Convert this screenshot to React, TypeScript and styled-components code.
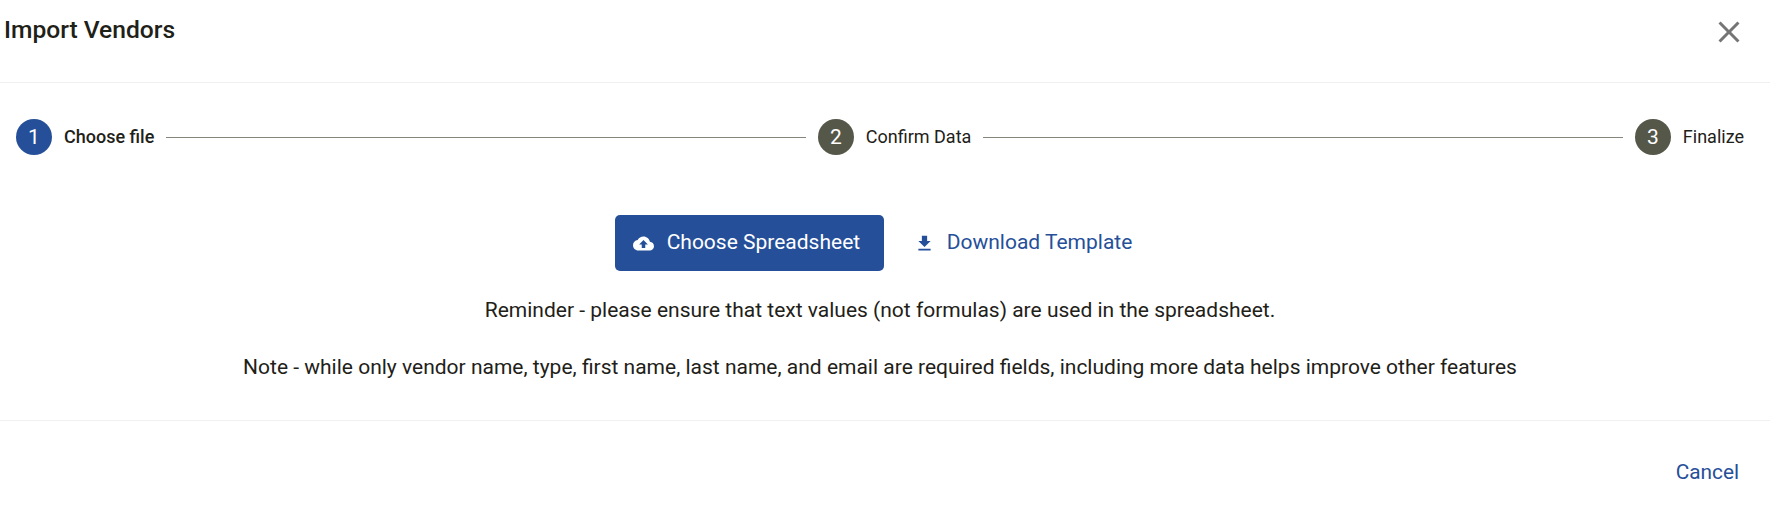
import styled, { createGlobalStyle } from 'styled-components';

const GlobalStyle = createGlobalStyle`
  html, body {
    margin: 0;
    background: #fff;
    font-family: Roboto, "Liberation Sans", sans-serif;
    color: #1e2118;
  }
`;

const Dialog = styled.div`
  width: 1770px;
  height: 510px;
  display: flex;
  flex-direction: column;
  background: #fff;
`;

const Header = styled.header`
  height: 83px;
  box-sizing: border-box;
  padding: 14px 23px 0 4px;
  display: flex;
  align-items: flex-start;
  justify-content: space-between;
  border-bottom: 1px solid #f0f0ef;
`;

const Title = styled.h2`
  margin: 0;
  font-size: 24.6px;
  font-weight: 500;
  line-height: 32px;
`;

const CloseButton = styled.button`
  width: 36px;
  height: 36px;
  padding: 0;
  border: none;
  background: none;
  color: #757575;
  display: flex;
`;

const Stepper = styled.div`
  display: flex;
  align-items: center;
  padding: 36px 26px 0 16px;
`;

const Step = styled.div`
  display: flex;
  align-items: center;
  gap: 12px;
`;

const StepCircle = styled.div<{ $active?: boolean }>`
  width: 36px;
  height: 36px;
  border-radius: 50%;
  background: ${(p) => (p.$active ? '#254f99' : '#555749')};
  color: #fff;
  font-size: 21px;
  display: flex;
  align-items: center;
  justify-content: center;
`;

const StepLabel = styled.span<{ $active?: boolean }>`
  font-size: 18px;
  font-weight: ${(p) => (p.$active ? 500 : 400)};
  line-height: 24px;
`;

const Connector = styled.div`
  flex: 1;
  height: 1px;
  margin: 0 12px;
  background: #85877d;
`;

const Body = styled.div`
  display: flex;
  flex-direction: column;
  align-items: center;
  padding: 60px 10px 0 0;
  flex: 1;
`;

const Actions = styled.div`
  display: flex;
  align-items: center;
  gap: 30px;
  padding-right: 13px;
`;

const PrimaryButton = styled.button`
  width: 269px;
  height: 56px;
  border: none;
  border-radius: 5px;
  background: #254f99;
  color: #fff;
  font-family: inherit;
  font-size: 21px;
  display: flex;
  align-items: center;
  gap: 13px;
  padding: 0 0 3px 18px;
`;

const TextButton = styled.button`
  border: none;
  background: none;
  color: #254f99;
  font-family: inherit;
  font-size: 21px;
  display: flex;
  align-items: center;
  gap: 12px;
  padding: 0 0 3px;
`;

const CancelButton = styled(TextButton)`
  font-size: 20.8px;
`;

const ButtonIcon = styled.svg`
  width: 21px;
  height: 21px;
  margin-top: 3px;
  fill: currentColor;
`;

const Note = styled.p`
  margin: 0;
  font-size: 21px;
  line-height: 28px;
  text-align: center;
  &:first-of-type {
    margin-top: 25px;
  }
  & + & {
    margin-top: 29px;
  }
`;

const Footer = styled.footer`
  height: 90px;
  box-sizing: border-box;
  border-top: 1px solid #f0f0ef;
  display: flex;
  justify-content: flex-end;
  align-items: center;
  padding: 16px 31px 0 0;
`;

const CloseIcon = () => (
  <svg width="36" height="36" viewBox="0 0 24 24" fill="currentColor">
    <path d="M19 6.41 17.59 5 12 10.59 6.41 5 5 6.41 10.59 12 5 17.59 6.41 19 12 13.41 17.59 19 19 17.59 13.41 12z" />
  </svg>
);

const UploadIcon = () => (
  <ButtonIcon viewBox="0 0 24 24">
    <path d="M19.35 10.04C18.67 6.59 15.64 4 12 4 9.11 4 6.6 5.64 5.35 8.04 2.34 8.36 0 10.91 0 14c0 3.31 2.69 6 6 6h13c2.76 0 5-2.24 5-5 0-2.64-2.05-4.78-4.65-4.96zM14 13v4h-4v-4H7l5-5 5 5h-3z" />
  </ButtonIcon>
);

const DownloadIcon = () => (
  <ButtonIcon viewBox="0 0 24 24">
    <path d="M19 9h-4V3H9v6H5l7 7 7-7zM5 18v2h14v-2H5z" />
  </ButtonIcon>
);

const App = () => {
  return (
    <Dialog>
      <GlobalStyle />
      <Header>
        <Title>Import Vendors</Title>
        <CloseButton aria-label="Close">
          <CloseIcon />
        </CloseButton>
      </Header>
      <Stepper>
        <Step>
          <StepCircle $active>1</StepCircle>
          <StepLabel $active>Choose file</StepLabel>
        </Step>
        <Connector />
        <Step>
          <StepCircle>2</StepCircle>
          <StepLabel>Confirm Data</StepLabel>
        </Step>
        <Connector />
        <Step>
          <StepCircle>3</StepCircle>
          <StepLabel>Finalize</StepLabel>
        </Step>
      </Stepper>
      <Body>
        <Actions>
          <PrimaryButton>
            <UploadIcon />
            Choose Spreadsheet
          </PrimaryButton>
          <TextButton>
            <DownloadIcon />
            Download Template
          </TextButton>
        </Actions>
        <Note>Reminder - please ensure that text values (not formulas) are used in the spreadsheet.</Note>
        <Note>
          Note - while only vendor name, type, first name, last name, and email are required fields, including more data helps improve other features
        </Note>
      </Body>
      <Footer>
        <CancelButton>Cancel</CancelButton>
      </Footer>
    </Dialog>
  );
};

export default App;
